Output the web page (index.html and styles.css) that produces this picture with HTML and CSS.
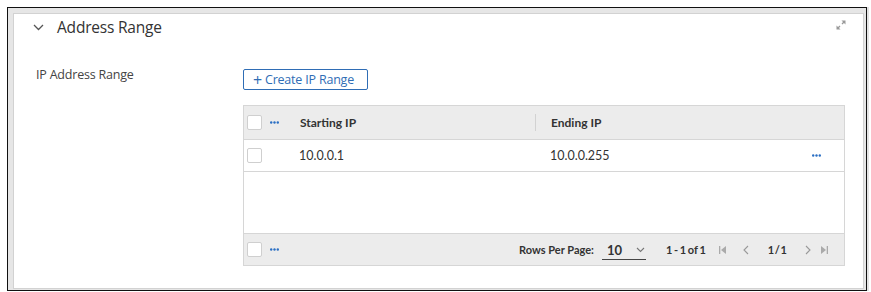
FILE: index.html
```html
<!DOCTYPE html>
<html>
<head>
    <title>Address Range</title>
    <link rel="stylesheet" href="styles.css">
</head>
<body>
    <div class="frame">
        <section class="panel">
            <header class="panel-head">
                <svg class="chevron" width="11" height="7" viewBox="0 0 11 7"><polyline points="1,1 5.5,5.5 10,1" fill="none" stroke="#555" stroke-width="1.3"/></svg>
                <h2 class="panel-title">Address Range</h2>
                <svg class="expand" width="10" height="10" viewBox="0 0 10 10">
                    <path d="M5.5 0.5h4v4z M4.5 9.5h-4v-4z" fill="#999"/>
                    <path d="M8 2L6 4 M2 8l2-2" stroke="#999" stroke-width="1.3"/>
                </svg>
            </header>

            <div class="field">
                <div class="field-label">IP Address Range</div>
                <div class="field-body">
                    <button class="btn-create"><span class="plus">+</span>Create IP Range</button>

                    <div class="grid">
                        <div class="grid-head">
                            <div class="cell-check"><span class="checkbox"></span></div>
                            <div class="cell-menu"><svg class="dots" width="9" height="3" viewBox="0 0 9 3"><circle cx="1.2" cy="1.5" r="1.2"/><circle cx="4.5" cy="1.5" r="1.2"/><circle cx="7.8" cy="1.5" r="1.2"/></svg></div>
                            <div class="cell-start">Starting IP</div>
                            <div class="cell-end">Ending IP</div>
                        </div>
                        <div class="grid-row">
                            <div class="cell-check"><span class="checkbox"></span></div>
                            <div class="cell-menu"></div>
                            <div class="cell-start">10.0.0.1</div>
                            <div class="cell-end">10.0.0.255</div>
                            <div class="cell-action"><svg class="dots" width="9" height="3" viewBox="0 0 9 3"><circle cx="1.2" cy="1.5" r="1.2"/><circle cx="4.5" cy="1.5" r="1.2"/><circle cx="7.8" cy="1.5" r="1.2"/></svg></div>
                        </div>
                        <div class="grid-empty"></div>
                        <div class="grid-foot">
                            <div class="cell-check"><span class="checkbox"></span></div>
                            <div class="cell-menu"><svg class="dots" width="9" height="3" viewBox="0 0 9 3"><circle cx="1.2" cy="1.5" r="1.2"/><circle cx="4.5" cy="1.5" r="1.2"/><circle cx="7.8" cy="1.5" r="1.2"/></svg></div>
                            <div class="pager">
                                <span class="rows-label">Rows Per Page:</span>
                                <span class="rows-select">10
                                    <svg width="9" height="6" viewBox="0 0 9 6"><polyline points="1,1 4.5,4.5 8,1" fill="none" stroke="#777" stroke-width="1.1"/></svg>
                                </span>
                                <span class="range">1 - 1 of 1</span>
                                <svg class="pg-icon first" width="7" height="8" viewBox="0 0 7 8"><rect x="0" y="0" width="1.3" height="8" fill="#aaa"/><path d="M7 0v8L2 4z" fill="#aaa"/></svg>
                                <svg class="pg-icon prev" width="6" height="10" viewBox="0 0 6 10"><polyline points="5,1 1,5 5,9" fill="none" stroke="#999" stroke-width="1.1"/></svg>
                                <span class="page">1 / 1</span>
                                <svg class="pg-icon next" width="6" height="10" viewBox="0 0 6 10"><polyline points="1,1 5,5 1,9" fill="none" stroke="#999" stroke-width="1.1"/></svg>
                                <svg class="pg-icon last" width="7" height="8" viewBox="0 0 7 8"><path d="M0 0v8l5-4z" fill="#aaa"/><rect x="5.7" y="0" width="1.3" height="8" fill="#aaa"/></svg>
                            </div>
                        </div>
                    </div>
                </div>
            </div>
        </section>
    </div>
</body>
</html>
```

FILE: styles.css
```css
body {
    margin: 0;
    background: #fff;
    font-family: Lato, "Open Sans", sans-serif;
    color: #333;
}
.frame {
    margin: 7px 0 0 7px;
    border: 1px solid #111;
    background: #e6e6e6;
    padding: 5px 2px 1px 5px;
    box-sizing: border-box;
    width: 860px;
    height: 284px;
    display: flex;
    box-shadow: 2px 0 0 #e4e4e4;
}
.panel {
    flex: 1;
    background: #fff;
    border: 1px solid #d2d2d2;
    padding: 0 18px 0 22px;
}
.panel-head {
    display: flex;
    align-items: center;
    height: 26px;
}
.chevron {
    margin-left: -3px;
    margin-right: 13px;
}
.panel-title {
    margin: 0;
    font-family: "Open Sans", sans-serif;
    font-weight: normal;
    font-size: 15.5px;
    color: #333;
    flex: 1;
    letter-spacing: -0.2px;
}
.expand {
    margin-top: -5px;
    margin-right: -1px;
}
.field {
    display: flex;
    margin-top: 29px;
}
.field-label {
    width: 207px;
    font-family: "Open Sans", sans-serif;
    font-size: 12.5px;
    color: #444;
    margin-top: -3px;
    letter-spacing: -0.2px;
}
.btn-create {
    display: flex;
    align-items: center;
    height: 21px;
    width: 125px;
    padding: 0 0 0 9px;
    border: 1px solid #2f6db5;
    border-radius: 2px;
    background: #fff;
    color: #2f6db5;
    font-family: "Open Sans", sans-serif;
    font-size: 12.5px;
    letter-spacing: -0.2px;
}
.plus {
    font-size: 16px;
    margin-right: 3px;
    line-height: 1;
}
.grid {
    margin-top: 15px;
    width: 600px;
    border: 1px solid #d6d6d6;
    font-size: 12px;
}
.grid-head,
.grid-row,
.grid-foot {
    display: flex;
    align-items: center;
}
.grid-head {
    height: 33px;
    background: #ececec;
    border-bottom: 1px solid #d6d6d6;
    font-weight: bold;
    color: #333;
}
.grid-row {
    height: 31px;
    border-bottom: 1px solid #d6d6d6;
    font-size: 12.5px;
}
.grid-empty {
    height: 61px;
    border-bottom: 1px solid #d6d6d6;
}
.grid-foot {
    height: 31px;
    background: #ececec;
}
.cell-check {
    width: 22px;
    padding-left: 3px;
    box-sizing: border-box;
    display: flex;
}
.checkbox {
    width: 13px;
    height: 13px;
    border: 1px solid #cfcfcf;
    border-radius: 2px;
    background: #fff;
}
.cell-menu {
    width: 34px;
    padding-left: 4px;
    box-sizing: border-box;
    display: flex;
}
.dots {
    fill: #2a6fc4;
}
.cell-start {
    width: 235px;
}
.grid-row .cell-start {
    margin-left: -1px;
    margin-right: 1px;
}
.cell-end {
    flex: 1;
    padding-left: 16px;
    position: relative;
}
.grid-head .cell-end::before {
    content: "";
    position: absolute;
    left: 0;
    top: -1px;
    height: 17px;
    border-left: 1px solid #d2d2d2;
}
.grid-row .cell-end {
    padding-left: 15px;
}
.cell-action {
    width: 32px;
    display: flex;
}
.pager {
    flex: 1;
    display: flex;
    align-items: center;
    justify-content: flex-end;
    padding-right: 16px;
    font-size: 11px;
    font-weight: bold;
    color: #333;
}
.rows-label {
    margin-right: 8px;
}
.rows-select {
    display: flex;
    align-items: center;
    width: 44px;
    box-sizing: border-box;
    padding-left: 5px;
    height: 19px;
    border-bottom: 1px solid #444;
    font-size: 13px;
    gap: 14px;
    margin-top: 2px;
}
.range {
    margin-left: 20px;
    margin-right: 13px;
    word-spacing: -1px;
}
.pg-icon.prev {
    margin-left: 17px;
}
.page {
    margin-left: 19px;
    margin-right: 18px;
    word-spacing: -2px;
}
.pg-icon.last {
    margin-left: 10px;
}
```
